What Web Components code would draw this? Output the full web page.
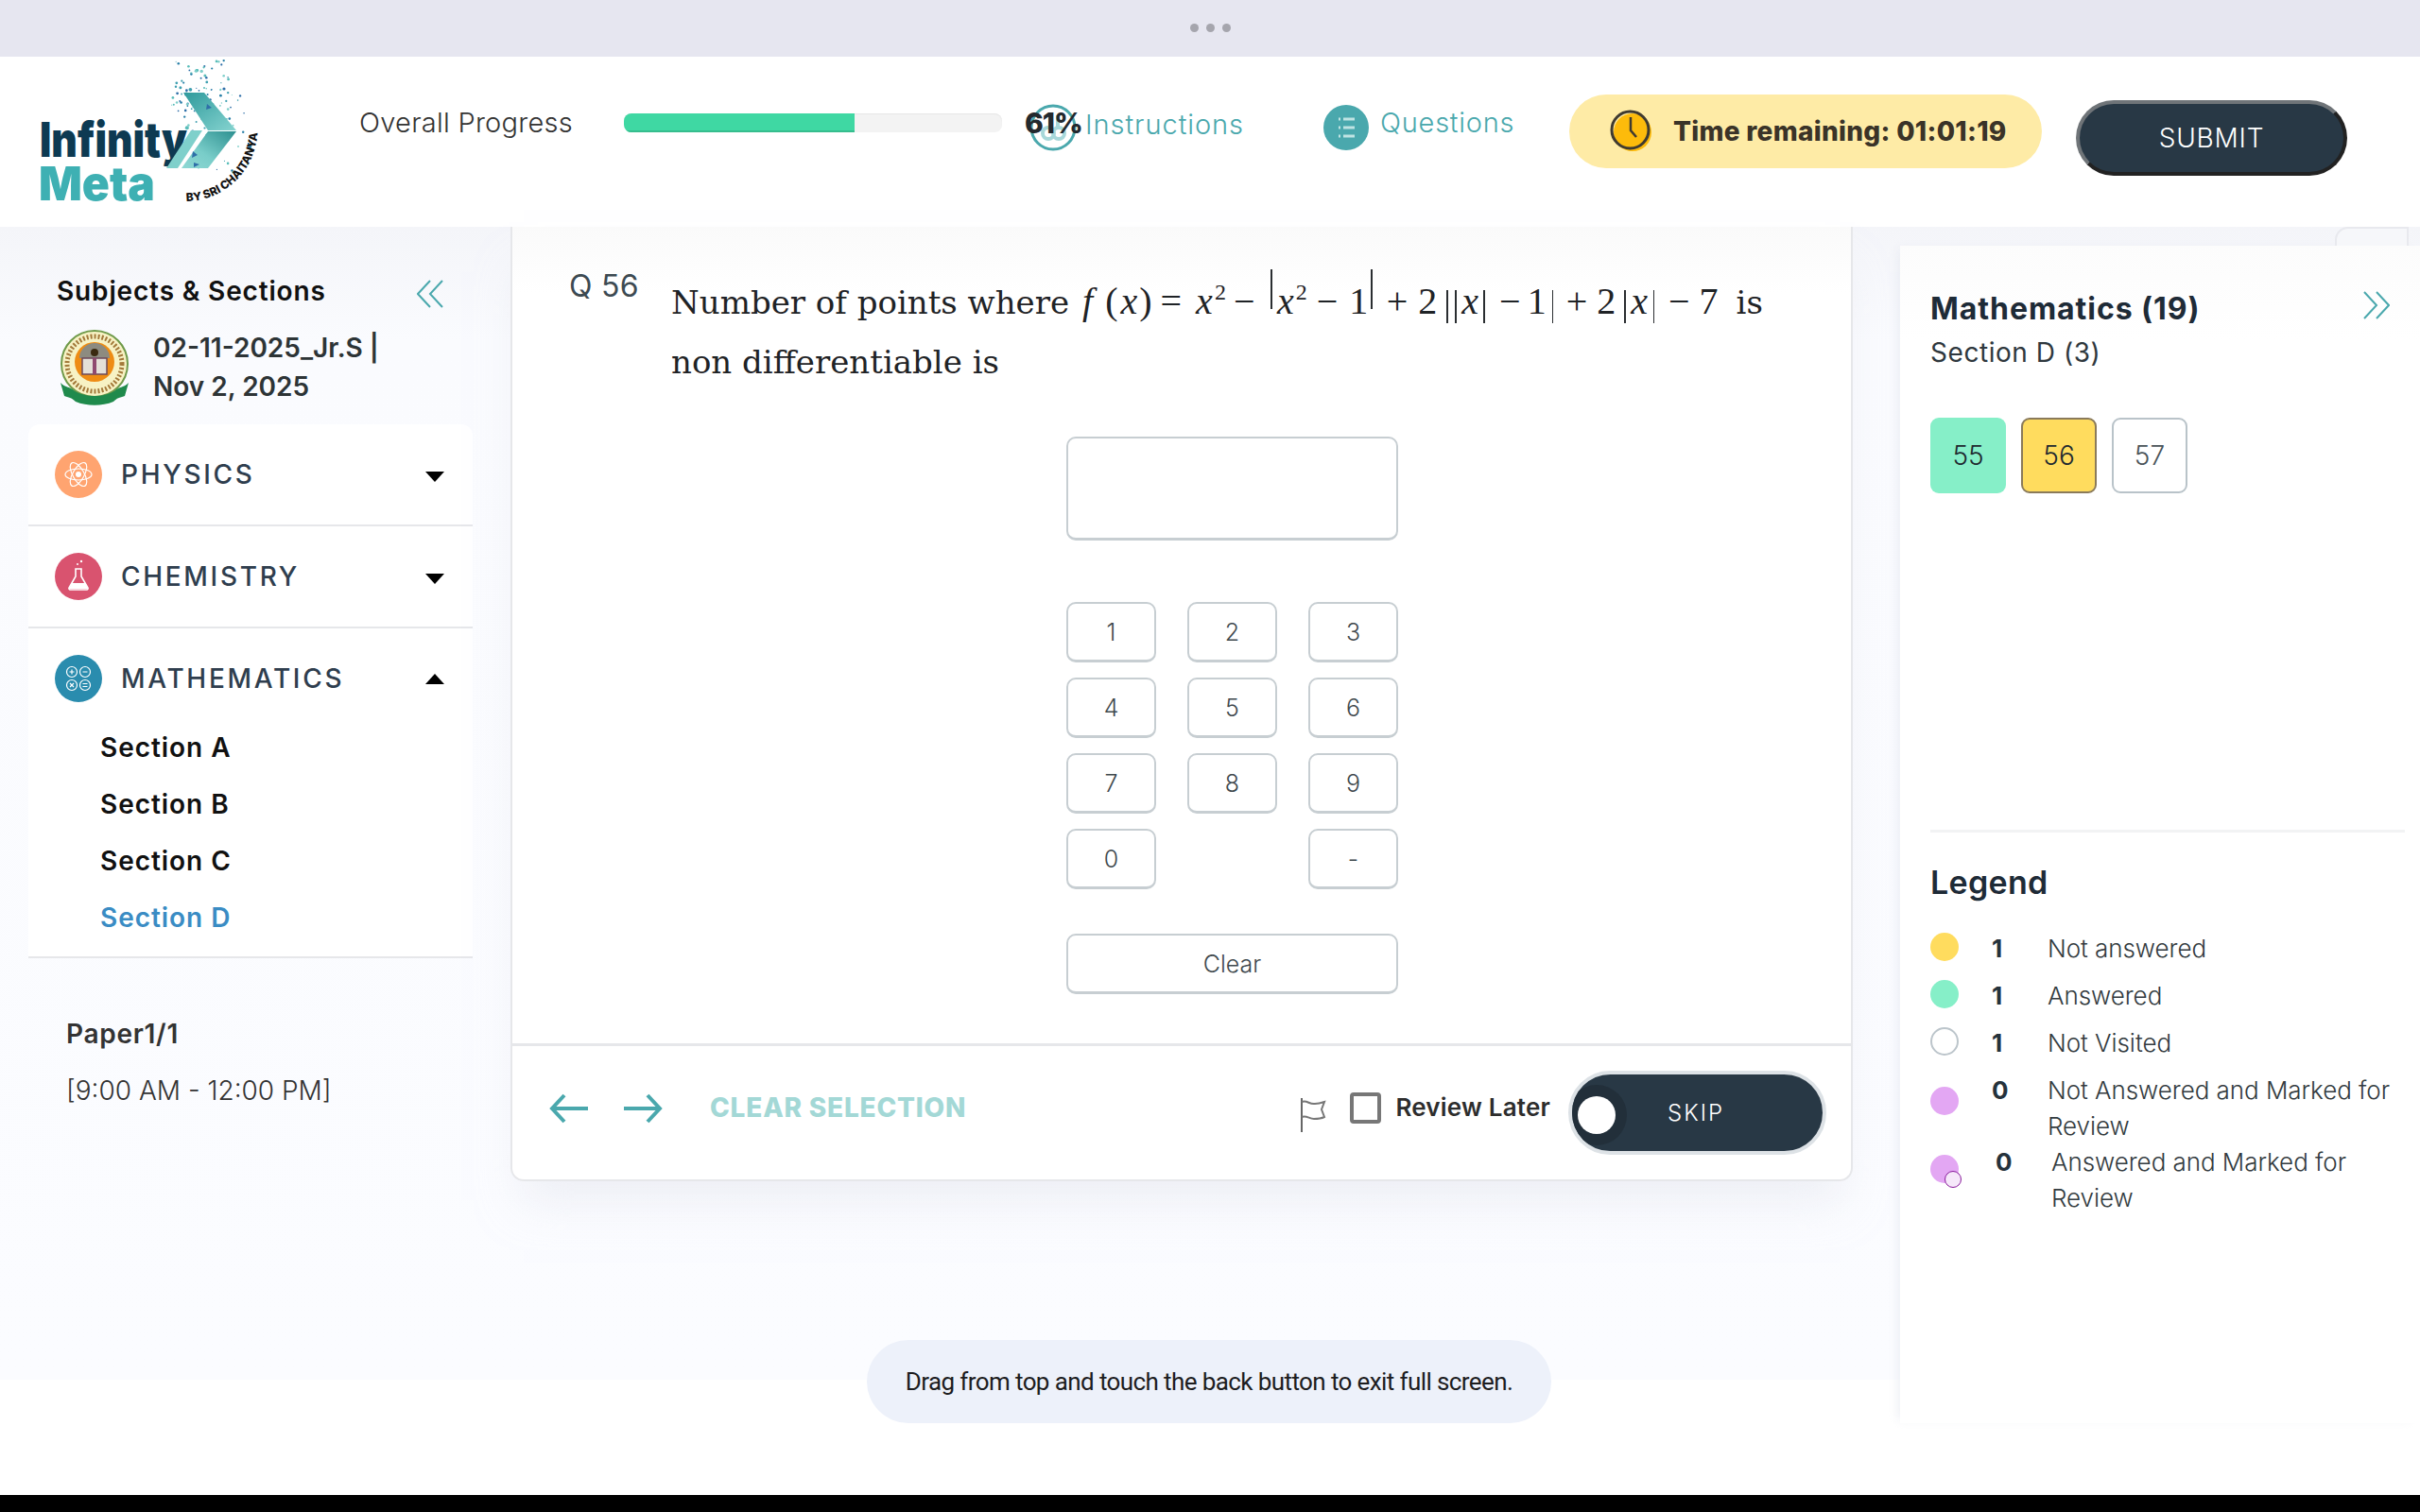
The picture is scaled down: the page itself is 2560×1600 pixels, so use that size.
<!DOCTYPE html>
<html>
<head>
<meta charset="utf-8">
<title>Infinity Meta</title>
<style>
html, body { margin: 0; padding: 0; }
body {
  width: 2560px;
  height: 1600px;
  overflow: hidden;
  position: relative;
  display: flex;
  flex-direction: column;
  font-family: Inter, "Liberation Sans", sans-serif;
  background: #fff;
}
</style>
</head>
<body>
<top-strip></top-strip>
<app-header></app-header>
<work-space>
  <side-bar></side-bar>
  <question-card></question-card>
  <palette-panel></palette-panel>
</work-space>
<black-strip></black-strip>
<exit-toast>Drag from top and touch the back button to exit full screen.</exit-toast>

<script>
const TEAL = "#4aa8ad";
const NAVY = "#283845";
const UI_FONT = 'Inter, "Liberation Sans", sans-serif';

class TopStrip extends HTMLElement {
  constructor() {
    super();
    this.attachShadow({ mode: "open" }).innerHTML = `
    <style>
      :host { display: flex; flex: none; height: 60px; background: #e6e6f0; align-items: center; justify-content: center; gap: 8px; padding-bottom: 2px; box-sizing: border-box; }
      i { width: 9px; height: 9px; border-radius: 50%; background: #a5a5ad; }
    </style>
    <i></i><i></i><i></i>`;
  }
}

class BlackStrip extends HTMLElement {
  constructor() {
    super();
    this.attachShadow({ mode: "open" }).innerHTML = `<style>:host { display: block; flex: none; height: 18px; background: #000; }</style>`;
  }
}

class InfinityLogo extends HTMLElement {
  constructor() {
    super();
    // specks of the logo, seeded so every render is the same
    var seed = 11;
    var rnd = () => (seed = (seed * 16807) % 2147483647) / 2147483647;
    var dots = "";
    var colors = ["#3f9fb0", "#2f6fa8", "#59bdb9", "#7fcfca", "#2a80a8"];
    for (var i = 0; i < 120; i++) {
      var upper = i < 75;
      var x = upper ? 186 + rnd() * 58 : 172 + rnd() * 94;
      var y = upper ? 64 + rnd() * 62 : 100 + rnd() * 84;
      var r = .5 + rnd() * (i % 9 == 0 ? 2.2 : 1);
      dots += `<circle cx="${x.toFixed(1)}" cy="${y.toFixed(1)}" r="${r.toFixed(1)}" fill="${colors[i % 5]}"/>`;
    }
    this.attachShadow({ mode: "open" }).innerHTML = `
    <style>
      :host { display: block; flex: none; width: 300px; height: 180px; }
      svg { display: block; }
      text { font-family: ${UI_FONT}; }
    </style>
    <svg width="300" height="180" viewBox="0 60 300 180">
      <defs>
        <linearGradient id="g1" x1="0" y1="0" x2="1" y2="1"><stop offset="0" stop-color="#2f9a9c"/><stop offset="1" stop-color="#86d4d0"/></linearGradient>
        <linearGradient id="g2" x1="1" y1="0" x2="0" y2="1"><stop offset="0" stop-color="#2c8f8f"/><stop offset=".6" stop-color="#79cdc9"/><stop offset="1" stop-color="#8fd8d4"/></linearGradient>
      </defs>
      ${dots}
      <text x="42" y="166" font-size="51" font-weight="900" fill="#0d3a52" textLength="156" lengthAdjust="spacingAndGlyphs">Infinity</text>
      <text x="41" y="212" font-size="50" font-weight="900" fill="#3eb0b3" textLength="123" lengthAdjust="spacingAndGlyphs">Meta</text>
      <polygon points="194,98 216,98 250,138 220,138" fill="url(#g1)"/>
      <polygon points="220,139 250,139 220,178 192,178" fill="url(#g2)"/>
      <polygon points="202,138 214,138 188,178 176,178" fill="#7fd0cb"/>
      <polygon points="219,110 224,114 218,116" fill="#2f6fa8"/>
      <polygon points="204,160 209,164 203,167" fill="#2f6fa8"/>
      <polygon points="205,172 211,174 205,177" fill="#2f6fa8"/>
      <path id="arc" d="M197 213 A 76 76 0 0 0 272 130 L 270 100" fill="none"/>
      <text font-size="12" font-weight="800" fill="#111"><textPath href="#arc">BY SRI CHAITANYA</textPath></text>
    </svg>`;
  }
}

class ProgressMeter extends HTMLElement {
  constructor() {
    super();
    var value = this.getAttribute("value");
    this.attachShadow({ mode: "open" }).innerHTML = `
    <style>
      :host { display: flex; flex: none; align-items: center; margin-top: 50px; height: 40px; position: relative; z-index: 1; margin-left: 80px; }
      .label { width: 280px; margin-bottom: 2px; font-size: 29px; font-weight: 300; letter-spacing: .25px; color: #333; white-space: nowrap; }
      .track { width: 400px; height: 20px; background: #f3f3f3; border-radius: 8px; overflow: hidden; box-shadow: inset 0 1px 1px #e6e6e6; }
      .fill { width: ${value}%; height: 100%; background: #3fd8a3; box-shadow: inset 0 -2px 0 #37bd8e; }
      .pct { margin-left: 24px; width: 61px; font-size: 30px; font-weight: 800; letter-spacing: -1px; color: #23292e; }
    </style>
    <div class="label">Overall Progress</div>
    <div class="track"><div class="fill"></div></div>
    <div class="pct">${value}%</div>`;
  }
}

class NavLink extends HTMLElement {
  constructor() {
    super();
    var filled = this.hasAttribute("filled");
    var icon = filled
      ? `<circle cx="24" cy="25" r="24" fill="${TEAL}"/><g stroke="#bfe3e3" stroke-width="3"><path d="M16 16h2M16 25h2M16 34h2"/><path d="M21 16h12M21 25h12M21 34h12"/></g>`
      : `<circle cx="25" cy="25" r="23" fill="#fff" stroke="${TEAL}" stroke-width="3"/><g fill="none" stroke="#a8d8da" stroke-width="4"><circle cx="20" cy="31" r="6"/><circle cx="31" cy="31" r="6"/><path d="M22 10v16M30 12v14"/></g>`;
    this.attachShadow({ mode: "open" }).innerHTML = `
    <style>
      :host { display: flex; flex: none; align-items: flex-start; height: 50px; margin-top: 50px; }
      svg { flex: none; }
      span { display: block; width: ${this.getAttribute("text-width")}px; margin: ${filled ? "0 0 0 12px" : "2px 0 0 9px"}; font-size: 29px; font-weight: 300; letter-spacing: ${filled ? ".75px" : ".95px"}; color: ${TEAL}; line-height: 40px; white-space: nowrap; }
    </style>
    <svg width="${filled ? 48 : 50}" height="50" viewBox="0 0 ${filled ? 48 : 50} 50">${icon}</svg>
    <span><slot></slot></span>`;
  }
}

class ExamTimer extends HTMLElement {
  constructor() {
    super();
    this.attachShadow({ mode: "open" }).innerHTML = `
    <style>
      :host { display: flex; flex: none; align-items: center; width: 500px; height: 78px; margin: 40px 0 0 58px; padding-left: 43px; box-sizing: border-box; background: #feeba6; border-radius: 39px; }
      span { margin-left: 21px; font-size: 28px; font-weight: 800; color: #3a3328; white-space: nowrap; letter-spacing: .3px; }
    </style>
    <svg width="46" height="46" viewBox="0 0 46 46">
      <circle cx="24" cy="24" r="20" fill="#fdbb0b"/>
      <circle cx="21.5" cy="21.5" r="19.5" fill="none" stroke="#3f3a30" stroke-width="3"/>
      <path d="M22 8v14l6 7" fill="none" stroke="#3f3a30" stroke-width="2.5"/>
    </svg>
    <span><slot></slot></span>`;
  }
}

class PillButton extends HTMLElement {
  constructor() {
    super();
    this.attachShadow({ mode: "open" }).innerHTML = `
    <style>
      :host { display: flex; flex: none; align-items: center; justify-content: center; width: 287px; height: 80px; margin: 46px 0 0 36px; box-sizing: border-box; background: ${NAVY}; color: #fff; border-radius: 40px; border: 4px solid #6f7478; border-bottom-color: #222; border-right-color: #222; border-left-color: #6f7478; font-size: 28px; font-weight: 300; letter-spacing: .8px; }
    </style>
    <slot></slot>`;
  }
}

class AppHeader extends HTMLElement {
  constructor() {
    super();
    this.attachShadow({ mode: "open" }).innerHTML = `
    <style>
      :host { display: flex; flex: none; align-items: flex-start; height: 180px; background: #fff; }
      nav-link.ins { margin-left: -56px; }
      nav-link.que { margin-left: 85px; }
    </style>
    <infinity-logo></infinity-logo>
    <progress-meter value="61"></progress-meter>
    <nav-link class="ins" text-width="167">Instructions</nav-link>
    <nav-link class="que" text-width="142" filled>Questions</nav-link>
    <exam-timer>Time remaining: 01:01:19</exam-timer>
    <pill-button>SUBMIT</pill-button>`;
  }
}

class WorkSpace extends HTMLElement {
  constructor() {
    super();
    this.attachShadow({ mode: "open" }).innerHTML = `
    <style>
      :host { display: grid; flex: 1; grid-template-columns: 540px 1420px 600px; min-height: 0; background: linear-gradient(to bottom, #f4f5f9 0, #fafbfe 120px, #fbfcff 1220px, #fff 1220px); }
      ::slotted(palette-panel) { margin-left: 50px; }
    </style>
    <slot></slot>`;
  }
}

const SUBJECT_ICONS = {
  atom: `<g fill="none" stroke="#fff" stroke-width="1.2"><ellipse cx="25" cy="25" rx="14" ry="6"/><ellipse cx="25" cy="25" rx="14" ry="6" transform="rotate(60 25 25)"/><ellipse cx="25" cy="25" rx="14" ry="6" transform="rotate(120 25 25)"/></g><circle cx="25" cy="25" r="3" fill="#fff"/>`,
  flask: `<path d="M22 17h6v8l7 12a1.5 1.5 0 0 1-1 2H16a1.5 1.5 0 0 1-1-2l7-12z" fill="none" stroke="#fff" stroke-width="1.6"/><path d="M18 32h14l3 6H15z" fill="#fff"/><circle cx="24" cy="12" r="1" fill="#fff"/><circle cx="28" cy="9" r="1.2" fill="#fff"/>`,
  math: `<g fill="none" stroke="#fff" stroke-width="1.2"><circle cx="18" cy="18" r="5.5"/><circle cx="32" cy="18" r="5.5"/><circle cx="18" cy="32" r="5.5"/><circle cx="32" cy="32" r="5.5"/><path d="M15.5 18h5M18 15.5v5M29.5 18h5M16 30l4 4M20 30l-4 4M29.5 30.5h5M29.5 33.5h5"/></g>`
};

class SubjectRow extends HTMLElement {
  constructor() {
    super();
    var open = this.hasAttribute("open");
    this.attachShadow({ mode: "open" }).innerHTML = `
    <style>
      :host { display: block; border-bottom: 2px solid #e6e7ea; }
      .head { display: flex; align-items: center; height: 106px; padding: 0 30px 0 28px; }
      svg { flex: none; }
      .name { margin-left: 20px; flex: 1; font-size: 28px; font-weight: 550; letter-spacing: 2.7px; color: #2f3e4e; }
      .caret { width: 0; height: 0; border-left: 10px solid transparent; border-right: 10px solid transparent; }
      .down { border-top: 11px solid #000; margin-top: 4px; }
      .up { border-bottom: 11px solid #000; }
      .sections { margin-top: -10px; padding: 0 0 11px 76px; }
    </style>
    <div class="head">
      <svg width="50" height="50" viewBox="0 0 50 50"><circle cx="25" cy="25" r="25" fill="${this.getAttribute("color")}"/>${SUBJECT_ICONS[this.getAttribute("icon")]}</svg>
      <div class="name">${this.getAttribute("name")}</div>
      <div class="caret ${open ? "up" : "down"}"></div>
    </div>
    ${open ? `<div class="sections"><slot></slot></div>` : ""}`;
  }
}

class SectionLink extends HTMLElement {
  constructor() {
    super();
    var active = this.hasAttribute("active");
    this.attachShadow({ mode: "open" }).innerHTML = `
    <style>
      :host { display: block; height: 60px; line-height: 60px; font-size: 28px; font-weight: 600; letter-spacing: .95px; color: ${active ? "#3a8cc4" : "#111"}; }
    </style>
    <slot></slot>`;
  }
}

class SideBar extends HTMLElement {
  constructor() {
    super();
    this.attachShadow({ mode: "open" }).innerHTML = `
    <style>
      :host { display: block; padding-top: 48px; }
      .title { display: flex; align-items: center; justify-content: space-between; height: 40px; padding: 0 71px 0 60px; font-size: 28px; font-weight: 600; letter-spacing: .85px; color: #111; }
      .title svg { margin-top: 5px; }
      .exam { display: flex; align-items: center; height: 82px; margin-top: 20px; padding-left: 62px; }
      .exam div { margin-left: 24px; font-size: 28px; font-weight: 600; line-height: 41px; letter-spacing: 0; color: #2d3436; }
      .card { margin: 19px 40px 0 30px; background: #fff; border-radius: 12px 12px 4px 4px; }
      .paper { margin: 60px 0 0 70px; font-size: 28px; line-height: 40px; font-weight: 600; color: #333; letter-spacing: .7px; }
      .time { margin: 20px 0 0 70px; font-size: 28px; line-height: 40px; font-weight: 300; color: #333; }
    </style>
    <div class="title">
      <span>Subjects &amp; Sections</span>
      <svg width="28" height="30" viewBox="0 0 28 30" fill="none" stroke="${TEAL}" stroke-width="2"><path d="M14 1L1 15l13 14M27 1L14 15l13 14"/></svg>
    </div>
    <div class="exam">
      <svg width="76" height="80" viewBox="0 0 76 80">
        <circle cx="38" cy="36" r="35" fill="#f7f2c4" stroke="#6f9a4a" stroke-width="2"/>
        <circle cx="38" cy="36" r="29" fill="none" stroke="#a3793a" stroke-width="5" stroke-dasharray="2 2"/>
        <circle cx="38" cy="34" r="21" fill="#ee8c14"/>
        <path d="M22 30a16 16 0 0 1 32 0z" fill="#8d8b80"/>
        <circle cx="38" cy="24" r="4" fill="#3a2a10"/>
        <path d="M25 30h13v17H25zM38 30h13v17H38z" fill="#e4e0d8" stroke="#6c4a5a" stroke-width="1.5"/>
        <rect x="36" y="30" width="4" height="17" fill="#8f4a70"/>
        <path d="M2 56c6 6 10 4 14 8 12 8 32 8 44 0 4-4 8-2 14-8l-4 14c-6 2-8 2-12 6-12 5-28 5-40 0-4-4-6-4-12-6z" fill="#1f8a4c"/>
      </svg>
      <div>02-11-2025_Jr.S |<br>Nov 2, 2025</div>
    </div>
    <div class="card">
      <subject-row name="PHYSICS" color="#ffa470" icon="atom"></subject-row>
      <subject-row name="CHEMISTRY" color="#d9536f" icon="flask"></subject-row>
      <subject-row name="MATHEMATICS" color="#2a8cae" icon="math" open>
        <section-link>Section A</section-link>
        <section-link>Section B</section-link>
        <section-link>Section C</section-link>
        <section-link active>Section D</section-link>
      </subject-row>
    </div>
    <div class="paper">Paper1/1</div>
    <div class="time">[9:00 AM - 12:00 PM]</div>`;
  }
}

class MathFormula extends HTMLElement {
  constructor() {
    super();
    // [gap before the piece, piece]; gaps taken from the rendered equation
    var x = "<i>x</i>", sq = '<sup>2</sup>', bar = '<b class="bar"></b>', tall = '<b class="bar tall"></b>';
    var pieces = [
      [0, "<i>f</i>"], [13, "("], [3, x], [2, ")"], [9, "="], [15, x], [2, sq], [8, "−"], [17, tall],
      [5, x], [2, sq], [10, "−"], [12, "1"], [3, tall], [15, "+"], [11, "2"], [10, bar], [7.5, bar],
      [5.5, x], [5, bar], [15.5, "−"], [7, "1"], [6, bar], [13.5, "+"], [10, "2"], [9, bar],
      [5.5, x], [6, bar], [14.5, "−"], [10, "7"]
    ];
    var html = pieces.map(([gap, part]) => `<span style="margin-left:${gap}px">${part}</span>`).join("");
    this.attachShadow({ mode: "open" }).innerHTML = `
    <style>
      :host { display: inline-flex; align-items: baseline; font-family: "Liberation Serif", serif; font-size: 40px; line-height: 1; color: #1f2326; letter-spacing: 0; }
      i { font-style: italic; }
      sup { font-size: 24px; line-height: 0; position: relative; top: -15px; vertical-align: baseline; }
      .bar { display: inline-block; width: 1.5px; height: 35px; background: #2a2e31; transform: translateY(10px); }
      .tall { height: 42px; transform: translateY(-5px); }
    </style>
    ${html}`;
  }
}

class NumberKeypad extends HTMLElement {
  constructor() {
    super();
    var keys = ["1", "2", "3", "4", "5", "6", "7", "8", "9", "0", "", "-"];
    var buttons = keys.map(k => k ? `<button>${k}</button>` : "<span></span>").join("");
    this.attachShadow({ mode: "open" }).innerHTML = `
    <style>
      :host { display: block; width: 351px; margin-left: 586px; }
      .answer { height: 110px; box-sizing: border-box; border: 2px solid #c7ced2; border-bottom-width: 3px; border-radius: 10px; background: #fff; margin-top: 48px; }
      .keys { display: grid; grid-template-columns: repeat(3, 95px); justify-content: space-between; grid-auto-rows: 64px; row-gap: 16px; margin-top: 65px; }
      button { font: 300 25px ${UI_FONT}; color: #3f494e; background: #fff; border: 2px solid #c7ced2; border-bottom-width: 3px; border-radius: 10px; padding: 0; }
      .clear { display: block; width: 100%; height: 64px; margin-top: 47px; }
    </style>
    <div class="answer"></div>
    <div class="keys">${buttons}</div>
    <button class="clear">Clear</button>`;
  }
}

class SkipToggle extends HTMLElement {
  constructor() {
    super();
    this.attachShadow({ mode: "open" }).innerHTML = `
    <style>
      :host { display: flex; flex: none; align-items: center; position: relative; overflow: hidden; width: 273px; height: 89px; box-sizing: border-box; background: ${NAVY}; border: 4px solid #dde2e6; border-radius: 45px; color: #fff; font-size: 24px; font-weight: 300; letter-spacing: 2px; }
      .knob { position: absolute; left: 6px; top: 23px; width: 40px; height: 40px; border-radius: 50%; background: #fff; box-shadow: 0 0 0 12px #222f3a; }
      span { margin-left: 101px; position: relative; }
    </style>
    <div class="knob"></div>
    <span><slot></slot></span>`;
  }
}

class QuestionCard extends HTMLElement {
  constructor() {
    super();
    this.attachShadow({ mode: "open" }).innerHTML = `
    <style>
      :host { display: flex; flex-direction: column; height: 1010px; box-sizing: border-box; background: linear-gradient(to bottom, #fafafa 0, #fff 70px); border: 2px solid #e6e7ea; border-top: 0; border-radius: 0 0 14px 14px; box-shadow: 0 34px 44px -14px rgba(225, 228, 236, .55); }
      .body { flex: 1; }
      .stem { display: flex; padding: 49px 40px 0 60px; }
      .qno { flex: none; width: 108px; font-size: 32px; line-height: 28px; color: #3d4a52; letter-spacing: .3px; }
      .text { font-family: "DejaVu Serif", serif; font-size: 34px; line-height: 62.5px; color: #1f2326; white-space: nowrap; }
      .lead { display: inline-block; width: 435px; }
      .tail { margin-left: 19px; }
      .foot { flex: none; display: flex; align-items: center; height: 144px; padding: 0 26px 0 39px; border-top: 3px solid #e6e7ea; box-sizing: border-box; }
      .back { margin-bottom: 10px; }
      .next { margin: 0 0 10px 38px; }
      .clear { margin: 0 0 12px 50px; font-size: 28px; font-weight: 800; color: #a3d8d6; letter-spacing: .8px; }
      .flag { margin: 5px 0 0 auto; }
      .box { margin: 0 0 10px 23px; width: 33px; height: 33px; box-sizing: border-box; border: 4px solid #777; border-radius: 4px; }
      .review { margin: 0 0 12px 15px; font-size: 26px; font-weight: 600; color: #2d2d2d; letter-spacing: .2px; }
      skip-toggle { margin-left: 19px; }
    </style>
    <div class="body">
      <div class="stem">
        <div class="qno">Q 56</div>
        <div class="text"><span class="lead">Number of points where</span><math-formula></math-formula><span class="tail">is</span><br>non differentiable is</div>
      </div>
      <number-keypad></number-keypad>
    </div>
    <div class="foot">
      <svg class="back" width="41" height="32" viewBox="0 0 41 32" fill="none" stroke="${TEAL}" stroke-width="4"><path d="M41 16H3M16 2L3 16l13 14"/></svg>
      <svg class="next" width="41" height="32" viewBox="0 0 41 32" fill="none" stroke="${TEAL}" stroke-width="4"><path d="M0 16h38M25 2l13 14-13 14"/></svg>
      <div class="clear">CLEAR SELECTION</div>
      <svg class="flag" width="30" height="36" viewBox="0 0 30 36" fill="none" stroke="#666" stroke-width="2"><path d="M2 0v36"/><path d="M2 4c6-2 8 3 14 2 4 0 7-1 10-2l-3 8 3 8c-4 2-7 2-11 2-5 0-8-4-13-2" stroke="#777"/></svg>
      <div class="box"></div>
      <div class="review">Review Later</div>
      <skip-toggle>SKIP</skip-toggle>
    </div>`;
  }
}

class LegendRow extends HTMLElement {
  constructor() {
    super();
    var kind = this.getAttribute("kind");
    var dot = this.getAttribute("dot") || 2;
    var shift = this.getAttribute("shift") || 0;
    var fills = { yellow: "#ffdc5e", green: "#86efc8", purple: "#e3a7f3", badge: "#e3a7f3", empty: "#fff" };
    this.attachShadow({ mode: "open" }).innerHTML = `
    <style>
      :host { display: grid; grid-template-columns: 30px 94px 1fr; margin-top: ${this.getAttribute("gap") || 12}px; font-size: 26px; line-height: 38px; color: #333b40; }
      .dot { position: relative; width: 30px; height: 30px; box-sizing: border-box; border-radius: 50%; margin-top: ${dot}px; background: ${fills[kind]}; ${kind == "empty" ? "border: 2px solid #bcc5cb;" : ""} }
      .mini { position: absolute; left: 15px; top: 17px; width: 18px; height: 18px; box-sizing: border-box; border: 1.5px solid #8a1d9c; background: #f6e8fa; border-radius: 50%; }
      .num { margin-left: ${35 + +shift}px; font-weight: 700; color: #25323c; white-space: nowrap; }
      .txt { margin-left: ${shift}px; font-weight: 300; letter-spacing: -.05px; white-space: nowrap; }
    </style>
    <div class="dot">${kind == "badge" ? `<div class="mini"></div>` : ""}</div>
    <div class="num">${this.getAttribute("count")}</div>
    <div class="txt"><slot></slot></div>`;
  }
}

class PalettePanel extends HTMLElement {
  constructor() {
    super();
    this.attachShadow({ mode: "open" }).innerHTML = `
    <style>
      :host { display: block; margin-top: 20px; height: 1246px; padding: 46px 16px 0 32px; box-sizing: border-box; background: linear-gradient(to bottom, #fcfcfc, #fff 100px); box-shadow: -6px 0 10px -4px rgba(225, 228, 236, .6); position: relative; }
      .tab { position: absolute; top: -20px; left: 460px; width: 78px; height: 20px; box-sizing: border-box; border: 2px solid #e8e9ee; border-bottom: 0; border-radius: 14px 0 0 0; background: #f6f7fa; }
      .top { display: flex; justify-content: space-between; align-items: center; height: 40px; padding-right: 16px; }
      h2 { margin: 0; font-size: 32px; font-weight: 700; letter-spacing: .95px; color: #1e2b37; }
      .top svg { margin-top: -6px; }
      .sec { margin-top: 9px; font-size: 28px; line-height: 36px; color: #2f383e; font-weight: 400; letter-spacing: .55px; }
      .qs { display: flex; gap: 16px; margin-top: 51px; height: 80px; }
      .q { width: 80px; height: 80px; box-sizing: border-box; border-radius: 9px; display: flex; align-items: center; justify-content: center; font-size: 28px; font-weight: 300; color: #1f2a30; }
      .done { background: #86efc8; }
      .cur { background: #ffdc5e; border: 2px solid #8a7a5a; }
      .new { background: #fff; border: 2px solid #b9c3c9; color: #4a5459; }
      hr { margin: 356px 0 0; border: 0; height: 3px; background: #f2f3f4; }
      h3 { margin: 33px 0 0; font-size: 34px; line-height: 40px; font-weight: 600; letter-spacing: .3px; color: #1e2b37; }
    </style>
    <div class="tab"></div>
    <div class="top">
      <h2>Mathematics (19)</h2>
      <svg width="28" height="30" viewBox="0 0 28 30" fill="none" stroke="${TEAL}" stroke-width="2"><path d="M1 1l13 14L1 29M14 1l13 14-13 14"/></svg>
    </div>
    <div class="sec">Section D (3)</div>
    <div class="qs">
      <div class="q done">55</div>
      <div class="q cur">56</div>
      <div class="q new">57</div>
    </div>
    <hr>
    <h3>Legend</h3>
    <legend-row kind="yellow" count="1" gap="31">Not answered</legend-row>
    <legend-row kind="green" count="1">Answered</legend-row>
    <legend-row kind="empty" count="1">Not Visited</legend-row>
    <legend-row kind="purple" count="0" dot="15">Not Answered and Marked for<br>Review</legend-row>
    <legend-row kind="badge" count="0" dot="11" shift="4" gap="0">Answered and Marked for<br>Review</legend-row>`;
  }
}

class ExitToast extends HTMLElement {
  constructor() {
    super();
    this.attachShadow({ mode: "open" }).innerHTML = `
    <style>
      :host { position: absolute; left: 917px; top: 1418px; width: 724px; height: 88px; display: flex; align-items: center; justify-content: center; background: #edf1fa; border-radius: 44px; font-family: Roboto, sans-serif; font-size: 26px; letter-spacing: -.6px; color: #1d1d1f; white-space: nowrap; }
    </style>
    <slot></slot>`;
  }
}

customElements.define("top-strip", TopStrip);
customElements.define("black-strip", BlackStrip);
customElements.define("infinity-logo", InfinityLogo);
customElements.define("progress-meter", ProgressMeter);
customElements.define("nav-link", NavLink);
customElements.define("exam-timer", ExamTimer);
customElements.define("pill-button", PillButton);
customElements.define("app-header", AppHeader);
customElements.define("work-space", WorkSpace);
customElements.define("subject-row", SubjectRow);
customElements.define("section-link", SectionLink);
customElements.define("side-bar", SideBar);
customElements.define("math-formula", MathFormula);
customElements.define("number-keypad", NumberKeypad);
customElements.define("skip-toggle", SkipToggle);
customElements.define("question-card", QuestionCard);
customElements.define("legend-row", LegendRow);
customElements.define("palette-panel", PalettePanel);
customElements.define("exit-toast", ExitToast);
</script>
</body>
</html>
